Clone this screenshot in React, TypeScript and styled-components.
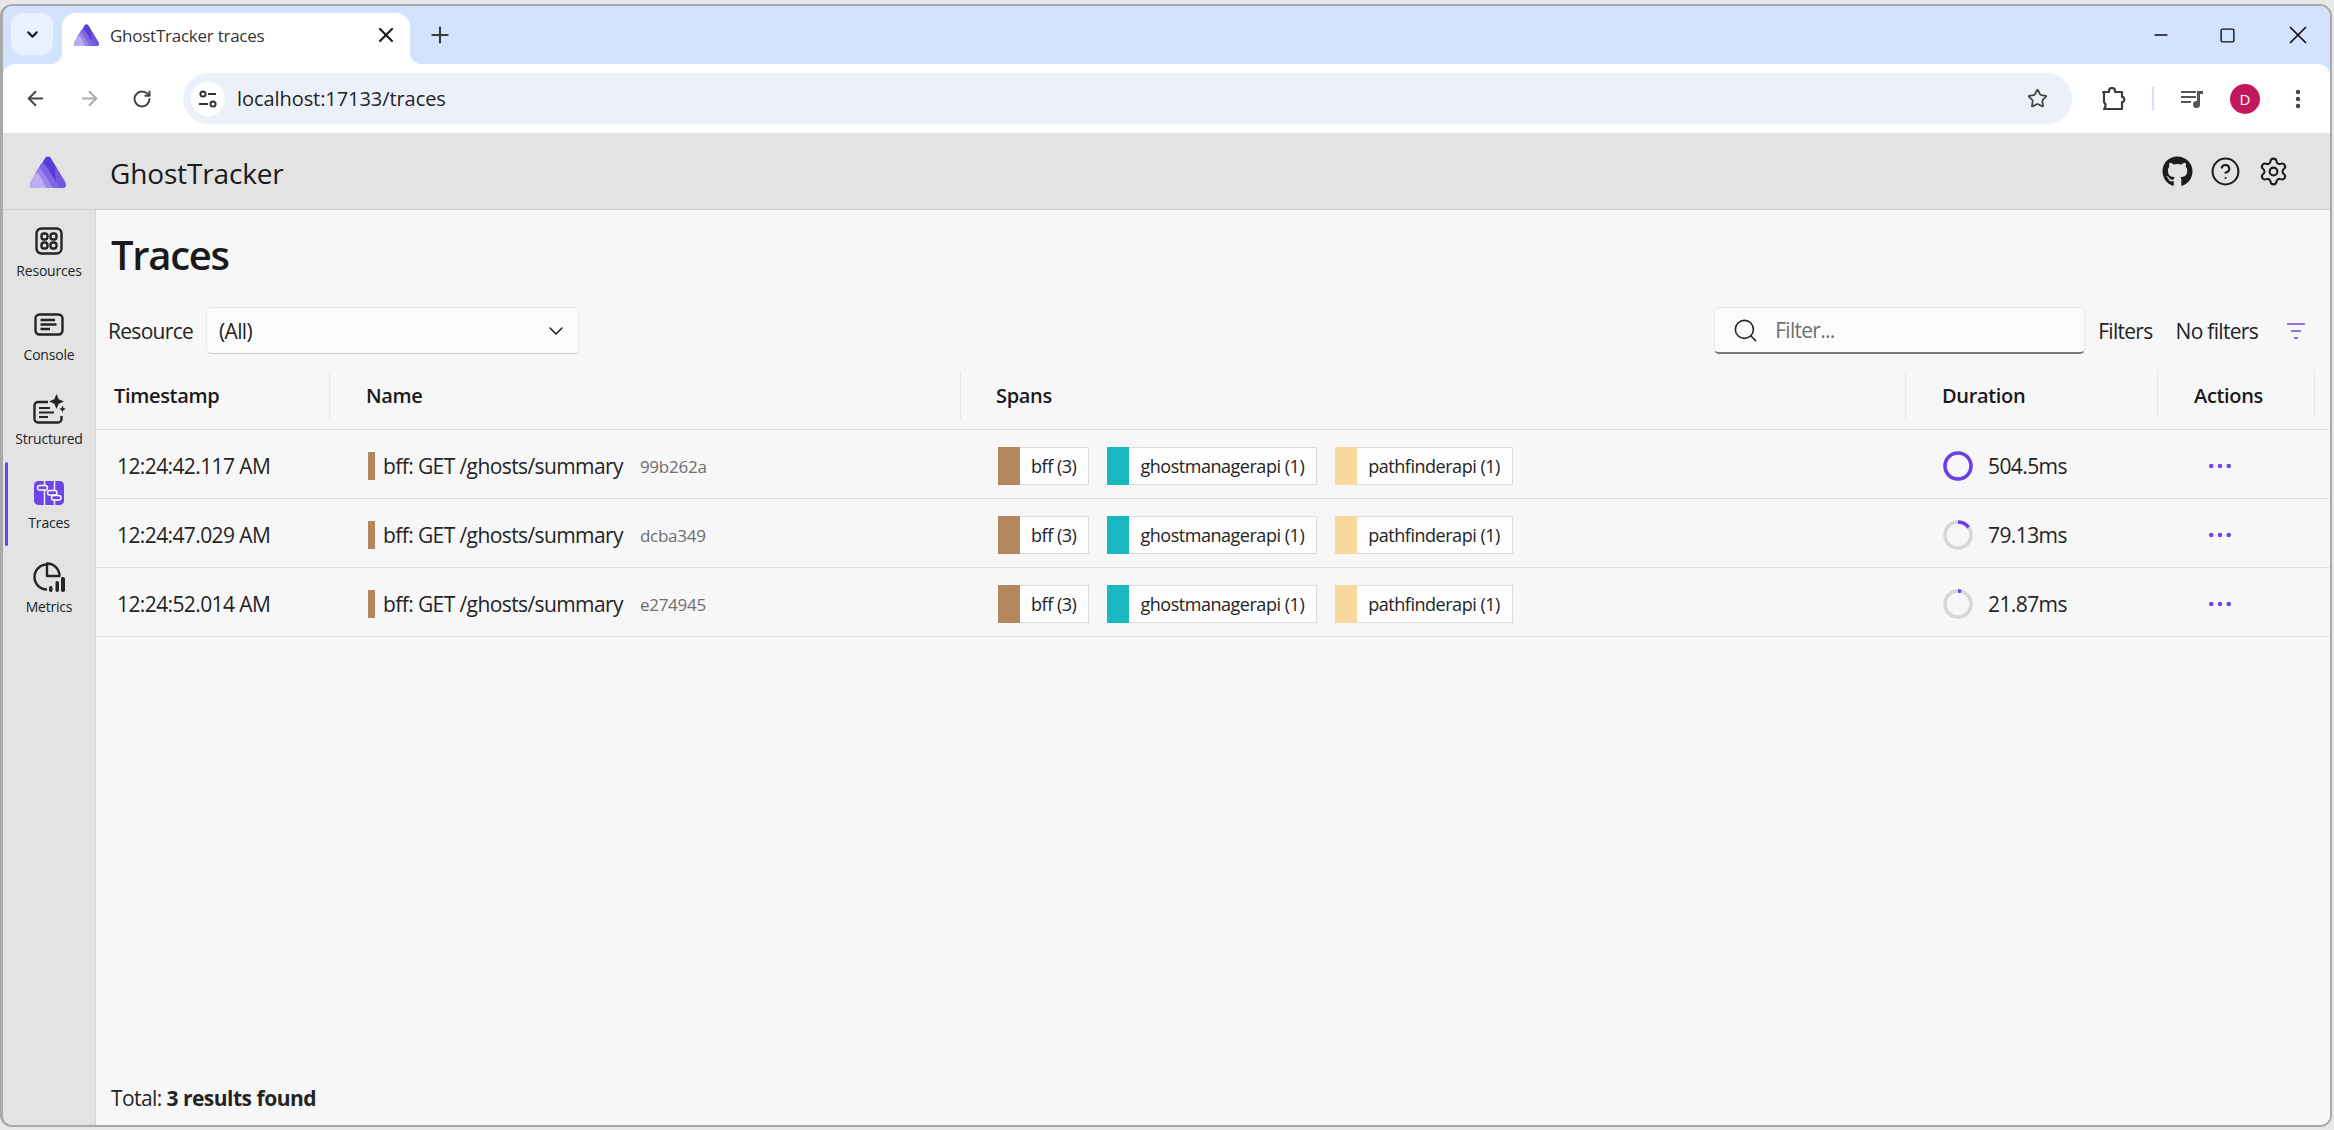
import React from "react";
import styled, { createGlobalStyle } from "styled-components";
import { ArrowLeft, ArrowRight, ChevronDown, Ellipsis, Minus, Plus, RotateCw, Search, Settings, Square, Star, X, CircleHelp, EllipsisVertical } from "lucide-react";
import { FaGithub } from "react-icons/fa";

const UI = '"Open Sans", "Noto Sans", sans-serif';

const GlobalStyle = createGlobalStyle`
  html, body {
    margin: 0;
    height: 100%;
    background: #e8e8e8;
    overflow: hidden;
  }
  body {
    font-family: ${UI};
    color: #1a1a1a;
  }
  * { box-sizing: border-box; }
`;

type Span = { name: string; color: string };

const spans: Span[] = [
  { name: "bff (3)", color: "#b5875e" },
  { name: "ghostmanagerapi (1)", color: "#17b8be" },
  { name: "pathfinderapi (1)", color: "#f8d89c" },
];

const traces = [
  { time: "12:24:42.117 AM", id: "99b262a", duration: "504.5ms", percent: 100 },
  { time: "12:24:47.029 AM", id: "dcba349", duration: "79.13ms", percent: 15 },
  { time: "12:24:52.014 AM", id: "e274945", duration: "21.87ms", percent: 4 },
];

const Logo = ({ size }: { size: number }) => (
  <svg width={size} height={(size * 32) / 36} viewBox="0 0 36 32">
    <path d="M15.500 1.500Q18 -.5 20.500 1.500L35 26Q37.500 32 32 32H4Q-1.500 32 1 26Z" fill="#5b3dd6" />
    <path d="M25 9.500L35 26Q37.500 32 32 32H26Z" fill="#7058e0" />
    <path d="M10.500 8.500Q13 6 15.500 9L29.500 32H4Q-1.500 32 1 26Z" fill="#7f66e6" />
    <path d="M7 14Q9.500 11 12 14.500L23 32H4Q-1.500 32 1 26Z" fill="#9a85ec" />
    <path d="M4.500 19Q7 15.500 9.500 19L16.500 32H4Q-1.500 32 1 26Z" fill="#bcaef3" />
  </svg>
);

const ResourcesIcon = () => (
  <svg width="28" height="28" viewBox="0 0 28 28" fill="none" stroke="#242424" strokeWidth="2.4">
    <rect x="1.500" y="1.500" width="25" height="25" rx="5" />
    <rect x="6.500" y="6.500" width="6" height="6" rx="2.500" />
    <rect x="15.500" y="6.500" width="6" height="6" rx="2.500" />
    <rect x="6.500" y="15.500" width="6" height="6" rx="2.500" />
    <rect x="15.500" y="15.500" width="6" height="6" rx="2.500" />
  </svg>
);

const ConsoleIcon = () => (
  <svg width="30" height="23" viewBox="0 0 30 23" fill="none" stroke="#242424" strokeWidth="2.4">
    <rect x="1.500" y="1.500" width="27" height="20" rx="4" />
    <path d="M6.500 7H21M6.500 11.500H22.500M6.500 16H16" />
  </svg>
);

const StructuredIcon = () => (
  <svg width="33" height="30" viewBox="0 0 33 30" fill="none">
    <path d="M15 8H5a3.500 3.500 0 0 0-3.500 3.500v13A3.500 3.500 0 0 0 5 28.500h20a3.500 3.500 0 0 0 3.500-3.500v-3" stroke="#242424" strokeWidth="2.4" />
    <path d="M6 14H17M6 18.500H21M6 23H15" stroke="#242424" strokeWidth="2.2" />
    <path d="M23.500 0l2.200 5.300L31 7.500l-5.300 2.200L23.500 15l-2.200-5.300L16 7.500l5.300-2.200z" fill="#242424" />
    <path d="M29.500 11.500l1 2.500 2.500 1-2.500 1-1 2.500-1-2.500-2.500-1 2.500-1z" fill="#242424" />
  </svg>
);

const TracesIcon = () => (
  <svg width="30" height="24" viewBox="0 0 30 24" fill="none">
    <rect width="30" height="24" rx="4.500" fill="#6f45e8" />
    <path d="M10.500 0V24M20.500 0V24" stroke="#efeaff" strokeWidth="1.500" />
    <rect x="3.500" y="4.500" width="10" height="4.500" rx="2.200" fill="#6f45e8" stroke="#fff" strokeWidth="1.400" />
    <rect x="13.500" y="9.500" width="9.500" height="4.500" rx="2.200" fill="#6f45e8" stroke="#fff" strokeWidth="1.400" />
    <rect x="17.500" y="14.500" width="9.500" height="4.500" rx="2.200" fill="#6f45e8" stroke="#fff" strokeWidth="1.400" />
  </svg>
);

const MetricsIcon = () => (
  <svg width="32" height="32" viewBox="0 0 32 32" fill="none">
    <path d="M14 3.500a12.500 12.500 0 1 0 0 25" stroke="#242424" strokeWidth="2.400" />
    <path d="M14 2.500a12.500 12.500 0 0 1 12.500 12.500H14z" stroke="#242424" strokeWidth="2.400" strokeLinejoin="round" />
    <rect x="16" y="25" width="3.500" height="6" rx="1.700" fill="#242424" />
    <rect x="22.500" y="20" width="3.500" height="11" rx="1.700" fill="#242424" />
    <rect x="28" y="16" width="4" height="15" rx="1.700" fill="#242424" />
  </svg>
);

const navItems = [
  { label: "Resources", icon: <ResourcesIcon /> },
  { label: "Console", icon: <ConsoleIcon /> },
  { label: "Structured", icon: <StructuredIcon /> },
  { label: "Traces", icon: <TracesIcon />, active: true },
  { label: "Metrics", icon: <MetricsIcon /> },
];

const DurationRing = ({ percent }: { percent: number }) => (
  <svg width="30" height="30" viewBox="0 0 30 30">
    <circle cx="15" cy="15" r="13" fill="none" stroke="#d6d6d6" strokeWidth="3.500" />
    <circle
      cx="15"
      cy="15"
      r="13"
      fill="none"
      stroke="#6a3fe6"
      strokeWidth="3.500"
      pathLength="100"
      strokeDasharray={`${percent} 100`}
      transform="rotate(-90 15 15)"
    />
  </svg>
);

const App = () => {
  document.title = "GhostTracker traces";

  return (
    <>
      <GlobalStyle />
      <Screen>
        <Browser>
          <BrowserChrome>
            <TabStrip>
              <TabMenu>
                <ChevronDown size={17} strokeWidth={3} color="#1f1f1f" />
              </TabMenu>
              <Tab>
                <Logo size={25} />
                <TabTitle>GhostTracker traces</TabTitle>
                <X size={24} strokeWidth={2.2} color="#1f1f1f" />
              </Tab>
              <NewTab>
                <Plus size={26} strokeWidth={1.9} color="#3c3c3c" />
              </NewTab>
              <WindowControls>
                <Minus size={20} strokeWidth={2} color="#111" />
                <Square size={17} strokeWidth={2} color="#111" />
                <X size={30} strokeWidth={1.4} color="#111" />
              </WindowControls>
            </TabStrip>

            <Toolbar>
              <ArrowLeft size={23} strokeWidth={2} color="#444" />
              <ArrowRight size={23} strokeWidth={2} color="#aaa" />
              <RotateCw size={20} strokeWidth={2.4} color="#444" />
              <Omnibox>
                <SiteInfo>
                  <svg width="20" height="18" viewBox="0 0 20 18" fill="none" stroke="#333" strokeWidth="2">
                    <circle cx="5" cy="4" r="2.600" />
                    <path d="M10 4h8M1 14h9" />
                    <circle cx="15" cy="14" r="2.600" />
                  </svg>
                </SiteInfo>
                <Url>localhost:17133/traces</Url>
                <Star size={21} strokeWidth={2} color="#444" />
              </Omnibox>
              <ToolbarEnd>
                <svg width="25" height="24" viewBox="0 0 25 24" fill="none" stroke="#3c3c3c" strokeWidth="2.200" strokeLinejoin="round">
                  <path d="M2 5h6V4a3 3 0 0 1 6 0v1h7v5h1a3 3 0 0 1 0 5h-1v7H3c2-2 2-4.500 0-7V5z" />
                </svg>
                <ToolbarDivider />
                <svg width="24" height="20" viewBox="0 0 24 20" fill="#555">
                  <path d="M1 2h15v2H1zM1 7h15v2H1zM1 12h10v2H1z" />
                  <path d="M17 2h6v3h-3v10.500a3.500 3.500 0 1 1-3-3.400z" />
                </svg>
                <Avatar>D</Avatar>
                <EllipsisVertical size={24} strokeWidth={2.4} color="#444" />
              </ToolbarEnd>
            </Toolbar>
          </BrowserChrome>

          <AppHeader>
            <LogoSlot>
              <Logo size={36} />
            </LogoSlot>
            <AppTitle>GhostTracker</AppTitle>
            <HeaderIcons>
              <FaGithub size={31} color="#1c1c1c" />
              <CircleHelp size={31} strokeWidth={1.6} color="#1c1c1c" />
              <Settings size={31} strokeWidth={1.6} color="#1c1c1c" />
            </HeaderIcons>
          </AppHeader>

          <Body>
            <Nav>
              {navItems.map((item) => (
                <NavItem key={item.label} $active={item.active}>
                  <NavIcon>{item.icon}</NavIcon>
                  <NavLabel>{item.label}</NavLabel>
                </NavItem>
              ))}
            </Nav>

            <Main>
              <Title>Traces</Title>
              <FilterBar>
                <FieldLabel>Resource</FieldLabel>
                <Select>
                  (All)
                  <ChevronDown size={24} strokeWidth={1.6} color="#222" />
                </Select>
                <Spacer />
                <FilterInput>
                  <Search size={27} strokeWidth={1.4} color="#222" />
                  <Placeholder>Filter...</Placeholder>
                </FilterInput>
                <FieldLabel>Filters</FieldLabel>
                <NoFilters>No filters</NoFilters>
                <svg width="18" height="16" viewBox="0 0 18 16" stroke="#6f45e8" strokeWidth="1.600">
                  <path d="M0 1h18M4 8h10M7 15h4" />
                </svg>
              </FilterBar>

              <Table>
                <HeaderRow>
                  <HeaderCell $pad={18}>Timestamp</HeaderCell>
                  <HeaderCell $pad={36}>Name</HeaderCell>
                  <HeaderCell $pad={35}>Spans</HeaderCell>
                  <HeaderCell $pad={36}>Duration</HeaderCell>
                  <HeaderCell $pad={36}>Actions</HeaderCell>
                </HeaderRow>
                {traces.map((t) => (
                  <Row key={t.id}>
                    <TimeCell>{t.time}</TimeCell>
                    <NameCell>
                      <NameBar />
                      <span>bff: GET /ghosts/summary</span>
                      <TraceId>{t.id}</TraceId>
                    </NameCell>
                    <SpansCell>
                      {spans.map((s) => (
                        <Badge key={s.name}>
                          <Swatch $color={s.color} />
                          <BadgeText>{s.name}</BadgeText>
                        </Badge>
                      ))}
                    </SpansCell>
                    <DurationCell>
                      <DurationRing percent={t.percent} />
                      <span>{t.duration}</span>
                    </DurationCell>
                    <ActionsCell>
                      <Ellipsis size={30} strokeWidth={1.7} color="#6f45e8" />
                    </ActionsCell>
                  </Row>
                ))}
              </Table>

              <Footer>
                Total: <b>3 results found</b>
              </Footer>
            </Main>
          </Body>
        </Browser>
      </Screen>
    </>
  );
};

export default App;

const COLUMNS = "234px 631px 945px 252px 157px 19px";

const Screen = styled.div`
  width: 2334px;
  height: 1130px;
  padding: 4px 2px 3px 0;
`;

const Browser = styled.div`
  height: 100%;
  display: flex;
  flex-direction: column;
  border: 2px solid #a9a9a9;
  border-left-width: 3px;
  border-radius: 12px;
  overflow: hidden;
  background: #f7f7f7;
`;

const BrowserChrome = styled.div`
  flex: none;
  background: #d3e3fd;
`;

const TabStrip = styled.div`
  height: 58px;
  display: flex;
  align-items: flex-end;
  padding-left: 8px;
`;

const TabMenu = styled.div`
  width: 42px;
  height: 42px;
  margin-bottom: 9px;
  border-radius: 12px;
  background: #e9f0fe;
  display: flex;
  align-items: center;
  justify-content: center;
`;

const Tab = styled.div`
  width: 348px;
  height: 51px;
  margin-left: 9px;
  padding: 0 12px 7px 12px;
  border-radius: 14px 14px 0 0;
  background: #fff;
  display: flex;
  align-items: center;
  gap: 11px;
  position: relative;

  &::before,
  &::after {
    content: "";
    position: absolute;
    bottom: 0;
    width: 12px;
    height: 12px;
  }
  &::before {
    left: -12px;
    background: radial-gradient(circle at 0 0, transparent 12px, #fff 12.5px);
  }
  &::after {
    right: -12px;
    background: radial-gradient(circle at 100% 0, transparent 12px, #fff 12.5px);
  }
`;

const TabTitle = styled.span`
  flex: 1;
  font-size: 17px;
  letter-spacing: -0.25px;
  color: #333;
`;

const NewTab = styled.div`
  margin: 0 0 16px 17px;
  display: flex;
`;

const WindowControls = styled.div`
  margin-left: auto;
  height: 58px;
  width: 179px;
  padding-right: 17px;
  align-self: flex-start;
  display: flex;
  justify-content: space-between;
  align-items: center;
`;

const Toolbar = styled.div`
  height: 69px;
  display: flex;
  align-items: center;
  gap: 31px;
  padding: 0 20px 0 21px;
  border-radius: 12px 12px 0 0;
  background: #fff;
`;

const Omnibox = styled.div`
  width: 1889px;
  height: 51px;
  padding: 0 24px 0 8px;
  border-radius: 26px;
  background: #ecf1f9;
  display: flex;
  align-items: center;
  gap: 12px;
`;

const SiteInfo = styled.div`
  width: 34px;
  height: 34px;
  border-radius: 50%;
  background: #fff;
  display: flex;
  align-items: center;
  justify-content: center;
`;

const Url = styled.span`
  flex: 1;
  font-size: 20px;
  letter-spacing: -0.07px;
  color: #222;
`;

const ToolbarEnd = styled.div`
  flex: 1;
  margin-left: -2px;
  display: flex;
  align-items: center;
  justify-content: space-between;
`;

const ToolbarDivider = styled.div`
  width: 2px;
  height: 24px;
  background: #d3e3fd;
`;

const Avatar = styled.div`
  width: 30px;
  height: 30px;
  border-radius: 50%;
  background: #c2185b;
  color: #fff;
  font-size: 15px;
  display: flex;
  align-items: center;
  justify-content: center;
`;

const AppHeader = styled.div`
  height: 77px;
  flex: none;
  display: flex;
  align-items: center;
  background: #e3e3e3;
  border-bottom: 1px solid #cfcfcf;
  padding-right: 41px;
`;

const LogoSlot = styled.div`
  width: 107px;
  padding: 2px 0 0 27px;
  display: flex;
`;

const AppTitle = styled.div`
  padding-top: 3px;
  font-size: 28px;
  letter-spacing: -0.15px;
  color: #1a1a1a;
`;

const HeaderIcons = styled.div`
  margin-left: auto;
  display: flex;
  gap: 17px;
  align-items: center;
`;

const Body = styled.div`
  flex: 1;
  min-height: 0;
  display: flex;
`;

const Nav = styled.nav`
  width: 93px;
  flex: none;
  background: #e3e3e3;
  border-right: 1px solid #d6d6d6;
`;

const NavItem = styled.div<{ $active?: boolean }>`
  height: 84px;
  display: flex;
  flex-direction: column;
  align-items: center;
  justify-content: center;
  gap: 4px;
  position: relative;

  &::before {
    content: "";
    display: ${(p) => (p.$active ? "block" : "none")};
    position: absolute;
    left: 2px;
    top: 0;
    bottom: 0;
    width: 3px;
    border-radius: 2px;
    background: #6f45e8;
  }
`;

const NavIcon = styled.div`
  height: 32px;
  display: flex;
  align-items: center;
  justify-content: center;
`;

const NavLabel = styled.div`
  font-size: 14px;
  letter-spacing: -0.2px;
  color: #242424;
`;

const Main = styled.main`
  flex: 1;
  min-width: 0;
  display: flex;
  flex-direction: column;
  background: #f7f7f7;
`;

const Title = styled.h1`
  margin: 0;
  padding: 17px 0 0 15px;
  height: 97px;
  font-size: 40px;
  font-weight: 600;
  letter-spacing: -1.3px;
  line-height: 56px;
  color: #1a1a1a;
`;

const FilterBar = styled.div`
  height: 47px;
  flex: none;
  display: flex;
  align-items: center;
  padding: 0 25px 0 12px;
`;

const FieldLabel = styled.span`
  font-size: 21px;
  letter-spacing: -0.7px;
  color: #242424;
  margin-left: 13px;

  &:first-child {
    margin-left: 0;
  }
`;

const NoFilters = styled(FieldLabel)`
  margin: 0 29px 0 23px;
`;

const Select = styled.div`
  width: 373px;
  height: 47px;
  margin-left: 13px;
  padding: 0 10px 0 12px;
  border-radius: 5px;
  border: 1px solid #eaeaea;
  border-bottom-color: #d0d0d0;
  background: #fbfbfb;
  font-size: 21px;
  letter-spacing: -0.7px;
  color: #242424;
  display: flex;
  align-items: center;
  justify-content: space-between;
`;

const Spacer = styled.div`
  flex: 1;
`;

const FilterInput = styled.div`
  width: 371px;
  height: 47px;
  padding: 0 0 0 17px;
  border-radius: 5px;
  border: 1px solid #eaeaea;
  border-bottom: 2px solid #7a7a7a;
  background: #fbfbfb;
  display: flex;
  align-items: center;
  gap: 16px;
`;

const Placeholder = styled.span`
  font-size: 21px;
  letter-spacing: -0.7px;
  color: #707070;
`;

const Table = styled.div`
  display: flex;
  flex-direction: column;
`;

const HeaderRow = styled.div`
  height: 76px;
  padding-top: 6px;
  display: grid;
  grid-template-columns: ${COLUMNS};
  align-items: center;
  border-bottom: 1px solid #e0e0e0;
`;

const HeaderCell = styled.div<{ $pad: number }>`
  height: 48px;
  padding: 2px 0 0 ${(p) => p.$pad}px;
  border-right: 1px solid #e6e6e6;
  display: flex;
  align-items: center;
  font-size: 20px;
  font-weight: 600;
  letter-spacing: -0.33px;
  color: #1a1a1a;
`;

const Row = styled.div`
  height: 69px;
  padding-top: 4px;
  display: grid;
  grid-template-columns: ${COLUMNS};
  align-items: center;
  border-bottom: 1px solid #e0e0e0;
  font-size: 21px;
  letter-spacing: -0.6px;
  color: #242424;
`;

const TimeCell = styled.div`
  padding-left: 21px;
`;

const NameCell = styled.div`
  padding-left: 38px;
  display: flex;
  align-items: center;
`;

const NameBar = styled.div`
  width: 7px;
  height: 28px;
  margin-right: 8px;
  background: #b5875e;
`;

const TraceId = styled.span`
  margin-left: 17px;
  font-size: 17px;
  letter-spacing: -0.25px;
  color: #6e6e6e;
`;

const SpansCell = styled.div`
  padding-left: 37px;
  display: flex;
  gap: 18px;
`;

const Badge = styled.div`
  height: 38px;
  display: flex;
  align-items: stretch;
  background: #fdfdfd;
  border: 1px solid #dcdcdc;
  border-left: 0;
`;

const Swatch = styled.div<{ $color: string }>`
  width: 22px;
  margin: -1px 0;
  background: ${(p) => p.$color};
`;

const BadgeText = styled.div`
  padding: 0 12px 0 11px;
  display: flex;
  align-items: center;
  font-size: 18px;
  letter-spacing: -0.47px;
  color: #242424;
`;

const DurationCell = styled.div`
  padding-left: 37px;
  display: flex;
  align-items: center;
  gap: 15px;
`;

const ActionsCell = styled.div`
  padding-left: 47px;
  display: flex;
  align-items: center;
`;

const Footer = styled.div`
  margin-top: auto;
  padding: 0 0 13px 15px;
  font-size: 21px;
  letter-spacing: -0.6px;
  color: #242424;

  b {
    font-weight: 700;
    letter-spacing: -0.5px;
  }
`;
